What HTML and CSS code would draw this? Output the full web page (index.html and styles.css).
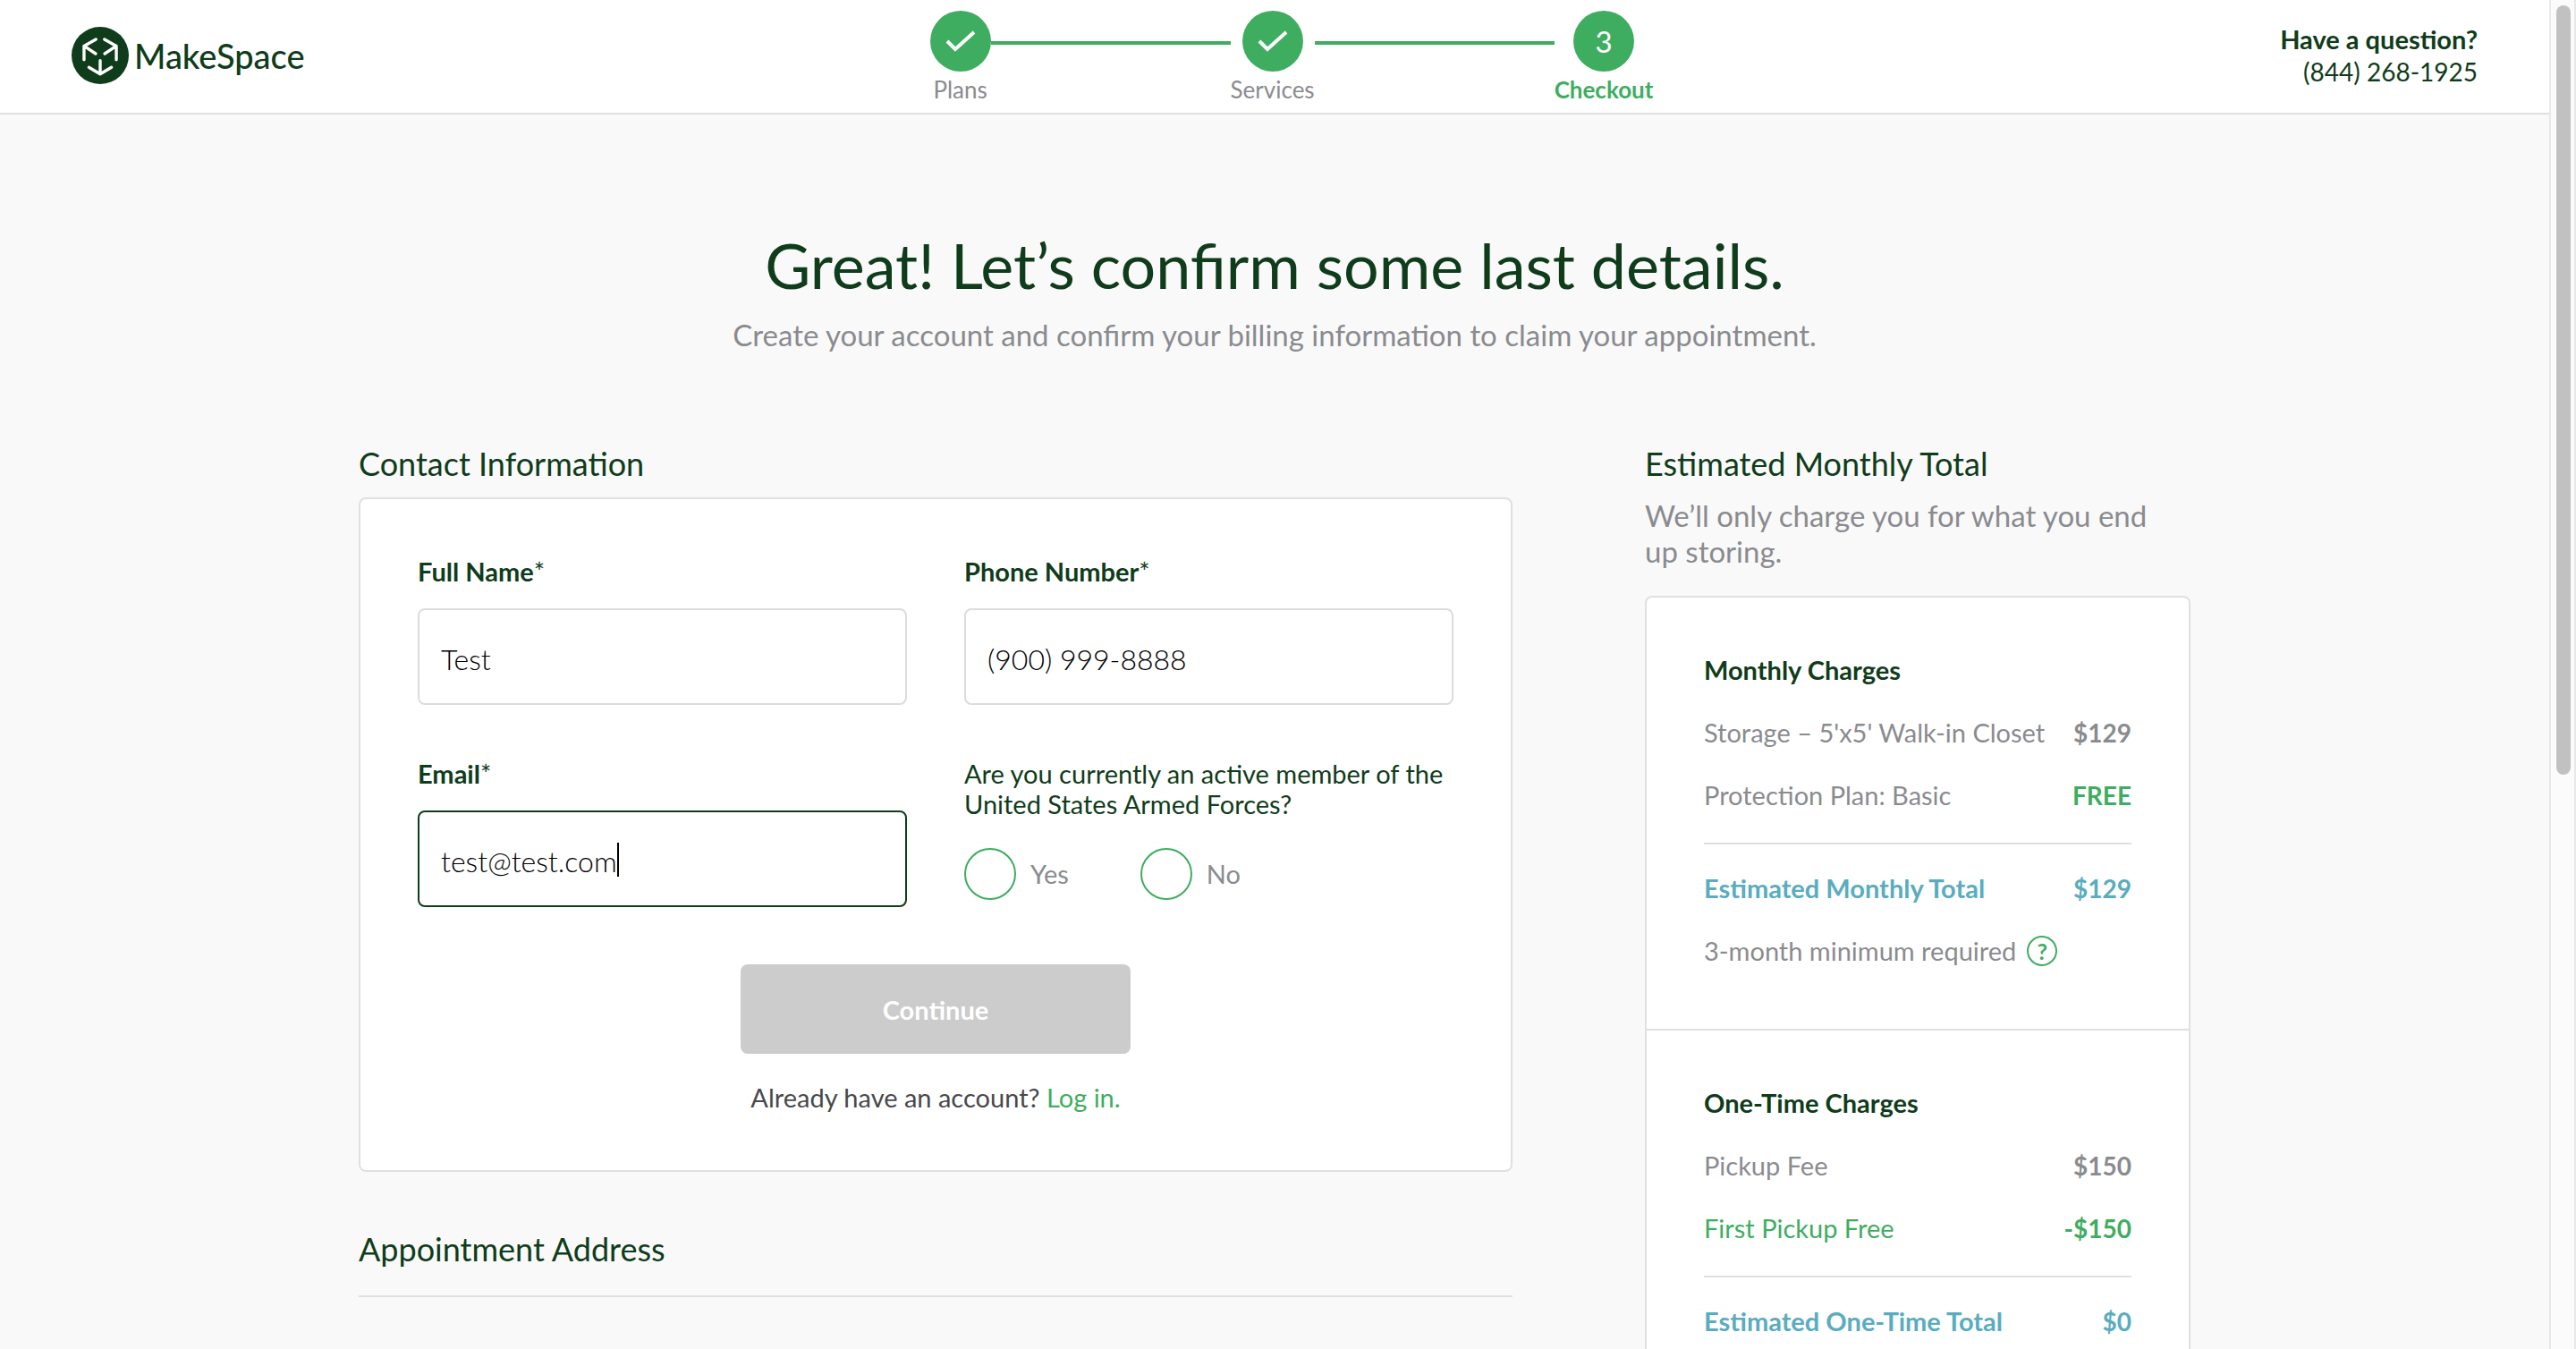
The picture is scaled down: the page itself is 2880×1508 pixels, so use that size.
FILE: index.html
```
<!DOCTYPE html>
<html lang="en">
<head>
  <meta charset="utf-8">
  <meta name="viewport" content="width=device-width, initial-scale=1">
  <title>MakeSpace – Checkout</title>
  <link rel="stylesheet" href="styles.css">
</head>
<body class="app">
  <div class="page">
    <header class="header">
      <a class="logo" href="#">
        <svg class="logo-mark" viewBox="0 0 188 188" aria-hidden="true">
          <circle cx="94" cy="94" r="94" fill="#0f3c1a"/>
          <g fill="none" stroke="#fff" stroke-width="10" stroke-linecap="round" stroke-linejoin="round">
            <path d="M80 41 41 63v45M41 63l38 25"/>
            <path d="M108 41l39 22v45M147 63l-38 25"/>
            <path d="M57 133l37 22 37-22M94 111v44"/>
          </g>
        </svg>
        <span>MakeSpace</span>
      </a>
      <ol class="steps">
        <li class="step">
          <span class="step-dot"><svg class="check" viewBox="0 0 34 24" aria-hidden="true"><path d="M2 12l9 9L32 2"/></svg></span>
          <span class="step-label">Plans</span>
        </li>
        <li class="step-line" role="presentation"></li>
        <li class="step">
          <span class="step-dot"><svg class="check" viewBox="0 0 34 24" aria-hidden="true"><path d="M2 12l9 9L32 2"/></svg></span>
          <span class="step-label">Services</span>
        </li>
        <li class="step-line" role="presentation"></li>
        <li class="step step-current" aria-current="step">
          <span class="step-dot">3</span>
          <span class="step-label">Checkout</span>
        </li>
      </ol>
      <div class="help">
        <strong>Have a question?</strong>
        <a class="help-phone" href="tel:+18442681925">(844) 268-1925</a>
      </div>
    </header>

    <main class="main">
      <h1 class="title">Great! Let’s confirm some last details.</h1>
      <p class="subtitle">Create your account and confirm your billing information to claim your appointment.</p>

      <div class="columns">
        <div class="details">
          <section>
            <h2 class="section-title">Contact Information</h2>
            <form class="card contact">
              <div class="fields">
                <div class="field">
                  <label class="label" for="name">Full Name<span class="star">*</span></label>
                  <input class="input" id="name" type="text" value="Test">
                </div>
                <div class="field">
                  <label class="label" for="phone">Phone Number<span class="star">*</span></label>
                  <input class="input" id="phone" type="tel" value="(900) 999-8888">
                </div>
                <div class="field">
                  <label class="label" for="email">Email<span class="star">*</span></label>
                  <div class="input-wrap">
                    <input class="input input-active" id="email" type="text" value="test@test.com">
                    <span class="caret"></span>
                  </div>
                </div>
                <fieldset class="question">
                  <legend class="legend">Are you currently an active member of the United States Armed Forces?</legend>
                  <div class="options">
                    <label class="option"><input class="radio" type="radio" name="military" value="yes">Yes</label>
                    <label class="option"><input class="radio" type="radio" name="military" value="no">No</label>
                  </div>
                </fieldset>
              </div>
              <button class="button" type="submit" disabled>Continue</button>
              <p class="login">Already have an account? <a class="link" href="#">Log in.</a></p>
            </form>
          </section>
          <section class="upcoming">
            <h2 class="section-title">Appointment Address</h2>
          </section>
        </div>

        <aside>
          <h2 class="section-title">Estimated Monthly Total</h2>
          <p class="note">We’ll only charge you for what you end up storing.</p>
          <div class="card">
            <section class="charges">
              <h3 class="charges-title">Monthly Charges</h3>
              <dl class="rows">
                <div class="row"><dt>Storage – 5'x5' Walk-in Closet</dt><dd class="amount">$129</dd></div>
                <div class="row"><dt>Protection Plan: Basic</dt><dd class="amount green">FREE</dd></div>
                <div class="row total"><dt>Estimated Monthly Total</dt><dd class="amount">$129</dd></div>
              </dl>
              <p class="minimum">3-month minimum required
                <button class="tip" type="button" aria-label="About the minimum">?</button>
              </p>
            </section>
            <section class="charges">
              <h3 class="charges-title">One-Time Charges</h3>
              <dl class="rows">
                <div class="row"><dt>Pickup Fee</dt><dd class="amount">$150</dd></div>
                <div class="row green"><dt>First Pickup Free</dt><dd class="amount">-$150</dd></div>
                <div class="row total"><dt>Estimated One-Time Total</dt><dd class="amount">$0</dd></div>
              </dl>
            </section>
          </div>
        </aside>
      </div>
    </main>
  </div>
  <div class="scrollbar" aria-hidden="true"><div class="scrollbar-thumb"></div></div>
</body>
</html>
```
FILE: styles.css
```
:root {
  --dark: #0f3c1a;
  --green: #3fad60;
  --blue: #5aacbf;
  --grey: #8a8b8f;
  --line: #e0e0e0;
}

* { box-sizing: border-box; }

h1, h2, h3, p, ol, dl, dd, fieldset, legend {
  margin: 0;
  padding: 0;
  border: 0;
  font-weight: 400;
}

a { color: inherit; text-decoration: none; }

input, button { font-family: inherit; }

.app {
  margin: 0;
  height: 100vh;
  overflow: hidden;
  display: grid;
  grid-template-columns: minmax(0, 1fr) 30px;
  background: #f9f9f9;
  color: var(--dark);
  font-family: Lato, "Open Sans", sans-serif;
  font-size: 29px;
  line-height: 34px;
}

.page { min-height: 0; overflow: hidden; }

/* Window scrollbar */
.scrollbar {
  padding: 6px 4px 0 6px;
  border: solid #e8e8e8;
  border-width: 0 2px;
  background: #fbfbfb;
}

.scrollbar-thumb {
  height: 57vh;
  border-radius: 8px;
  background: #c1c1c1;
}

/* Header */
.header {
  display: grid;
  grid-template-columns: 1fr auto 1fr;
  align-items: center;
  padding: 12px 80px;
  border-bottom: 2px solid var(--line);
  background: #fff;
}

.logo {
  display: flex;
  align-items: center;
  gap: 6px;
  padding-bottom: 2px;
  font-size: 38px;
  line-height: 44px;
  font-weight: 500;
}

.logo-mark { width: 64px; height: 64px; }

.steps {
  display: flex;
  padding-left: 38px;
  list-style: none;
}

.step {
  display: flex;
  flex-direction: column;
  align-items: center;
  gap: 6px;
}

.step-dot {
  display: grid;
  place-items: center;
  width: 68px;
  height: 68px;
  border-radius: 50%;
  background: var(--green);
  color: #fff;
  font-size: 33px;
}

.check {
  width: 34px;
  height: 24px;
  fill: none;
  stroke: #fff;
  stroke-width: 4;
}

.step-label {
  color: var(--grey);
  font-size: 26px;
  line-height: 28px;
}

.step-current .step-label { color: var(--green); font-weight: 700; }

.step-line {
  width: 268px;
  height: 4px;
  margin-top: 34px;
  background: var(--green);
}

.help {
  display: flex;
  flex-direction: column;
  padding-bottom: 2px;
  text-align: right;
  line-height: 36px;
}

.help-phone { font-size: 28px; }

/* Page intro */
.main {
  max-width: 2048px;
  margin: 0 auto;
  padding-top: 126px;
}

.title {
  font-size: 70px;
  line-height: 84px;
  text-align: center;
}

.subtitle {
  margin-top: 16px;
  color: var(--grey);
  font-size: 33px;
  line-height: 40px;
  text-align: center;
}

.columns {
  display: grid;
  grid-template-columns: minmax(0, 1290fr) minmax(0, 610fr);
  gap: 148px;
  margin-top: 102px;
}

.section-title {
  margin-bottom: 16px;
  font-size: 36px;
  line-height: 44px;
}

.card {
  border: 2px solid var(--line);
  border-radius: 8px;
  background: #fff;
}

/* Contact form */
.contact {
  display: flex;
  flex-direction: column;
  align-items: center;
  padding: 64px;
}

.fields {
  display: grid;
  grid-template-columns: 1fr 1fr;
  gap: 60px 64px;
  width: 100%;
}

.field { display: flex; flex-direction: column; gap: 24px; }

.label { font-weight: 700; }

.star { font-weight: 400; }

.input-wrap { position: relative; }

.input {
  width: 100%;
  height: 108px;
  padding: 4px 24px 0;
  border: 2px solid #dcdcdc;
  border-radius: 8px;
  background: #fff;
  color: #000;
  font-size: 32px;
  font-weight: 300;
}

.input-active { border-color: var(--dark); }

.caret {
  position: absolute;
  top: 36px;
  left: 223px;
  width: 2px;
  height: 38px;
  background: #000;
}

.question { min-width: 0; }

.options {
  display: flex;
  gap: 80px;
  margin-top: 32px;
}

.option {
  display: flex;
  align-items: center;
  gap: 16px;
  color: var(--grey);
}

.radio {
  appearance: none;
  width: 58px;
  height: 58px;
  margin: 0;
  border: 2px solid var(--green);
  border-radius: 50%;
  background: #fff;
}

.button {
  width: 436px;
  height: 100px;
  margin-top: 64px;
  border: 0;
  border-radius: 8px;
  background: #ccc;
  color: #fff;
  font-size: 29px;
  font-weight: 700;
}

.login { margin-top: 32px; color: #48494b; }

.link { color: var(--green); }

.upcoming {
  margin-top: 64px;
  padding-bottom: 14px;
  border-bottom: 2px solid var(--line);
}

/* Price summary */
.note {
  margin-bottom: 30px;
  padding-right: 32px;
  color: var(--grey);
  font-size: 33px;
  line-height: 40px;
}

.charges {
  padding: 64px 64px 70px;
  color: var(--grey);
}

.charges + .charges { border-top: 2px solid var(--line); }

.charges-title {
  margin-bottom: 36px;
  color: var(--dark);
  font-size: 29px;
  font-weight: 700;
}

.rows { display: grid; gap: 36px; }

.row { display: flex; justify-content: space-between; }

.amount { font-size: 28px; font-weight: 700; }

.green { color: var(--green); }

.total {
  padding-top: 32px;
  border-top: 2px solid var(--line);
  color: var(--blue);
  font-weight: 700;
}

.minimum {
  display: flex;
  align-items: center;
  gap: 12px;
  margin-top: 36px;
}

.tip {
  width: 34px;
  height: 34px;
  padding: 0;
  border: 2px solid var(--green);
  border-radius: 50%;
  background: #fff;
  color: var(--green);
  font-size: 25px;
  line-height: 28px;
  font-weight: 700;
}
```
